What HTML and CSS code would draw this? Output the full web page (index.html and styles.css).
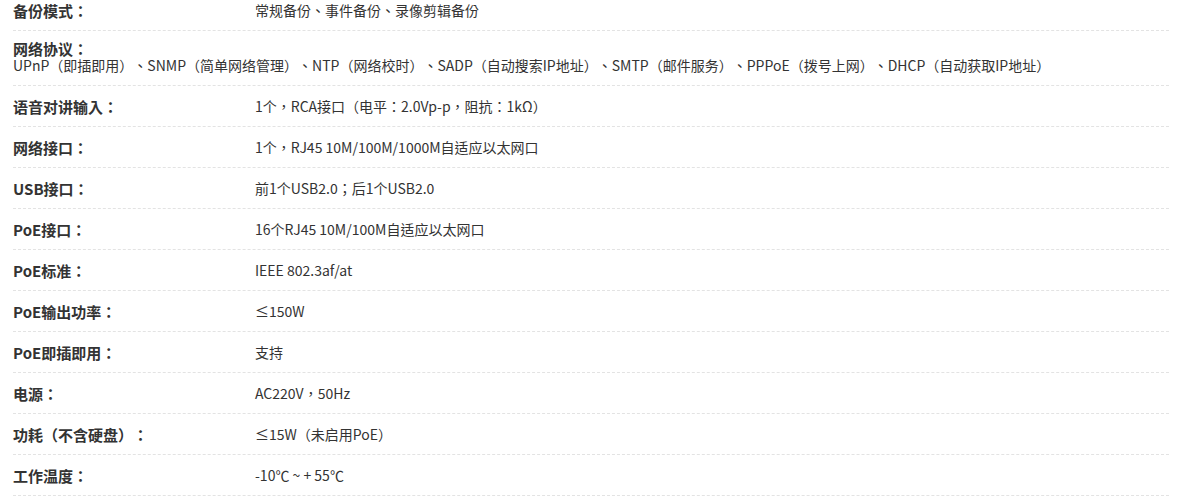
FILE: index.html
```html
<html>
<head>
<meta charset="utf-8">
<title>产品参数</title>
<link rel="stylesheet" href="styles.css">
</head>
<body>
    <div class="spec-list">
        <div class="spec-row">
            <span class="spec-name">备份模式：</span>
            <span class="spec-value">常规备份、事件备份、录像剪辑备份</span>
        </div>
        <div class="spec-row spec-row-wide">
            <div class="spec-name">网络协议：</div>
            <div class="spec-value">UPnP（即插即用）、SNMP（简单网络管理）、NTP（网络校时）、SADP（自动搜索IP地址）、SMTP（邮件服务）、PPPoE（拨号上网）、DHCP（自动获取IP地址）</div>
        </div>
        <div class="spec-row">
            <span class="spec-name">语音对讲输入：</span>
            <span class="spec-value">1个，RCA接口（电平：2.0Vp-p，阻抗：1kΩ）</span>
        </div>
        <div class="spec-row">
            <span class="spec-name">网络接口：</span>
            <span class="spec-value">1个，RJ45 10M/100M/1000M自适应以太网口</span>
        </div>
        <div class="spec-row">
            <span class="spec-name">USB接口：</span>
            <span class="spec-value">前1个USB2.0；后1个USB2.0</span>
        </div>
        <div class="spec-row">
            <span class="spec-name">PoE接口：</span>
            <span class="spec-value">16个RJ45 10M/100M自适应以太网口</span>
        </div>
        <div class="spec-row">
            <span class="spec-name">PoE标准：</span>
            <span class="spec-value">IEEE 802.3af/at</span>
        </div>
        <div class="spec-row">
            <span class="spec-name">PoE输出功率：</span>
            <span class="spec-value">≤150W</span>
        </div>
        <div class="spec-row">
            <span class="spec-name">PoE即插即用：</span>
            <span class="spec-value">支持</span>
        </div>
        <div class="spec-row">
            <span class="spec-name">电源：</span>
            <span class="spec-value">AC220V，50Hz</span>
        </div>
        <div class="spec-row">
            <span class="spec-name">功耗（不含硬盘）：</span>
            <span class="spec-value">≤15W（未启用PoE）</span>
        </div>
        <div class="spec-row">
            <span class="spec-name">工作温度：</span>
            <span class="spec-value">-10℃ ~ + 55℃</span>
        </div>
    </div>
</body>
</html>
```

FILE: styles.css
```css
body{
    margin: 0;
    background: #fff;
    color: #333;
    font-family: "Noto Sans CJK TC", "Noto Sans CJK SC", sans-serif;
    text-spacing-trim: space-all; /* keep full width punctuation */
}
.spec-list{
    margin-top: -10px; /* page is scrolled a little */
    padding: 0 8px 0 13px;
}
.spec-row{
    display: flex;
    align-items: center;
    height: 40px;
    border-bottom: 1px dashed #e3e3e3;
}
.spec-name{
    width: 242px;
    flex-shrink: 0;
    font-size: 15px;
    font-weight: bold;
}
.spec-value{
    font-size: 14px;
}
/* the long value drops under its label */
.spec-row-wide{
    display: block;
    height: auto;
    padding: 10px 0 12px;
}
.spec-row-wide .spec-name{
    line-height: 16px;
}
.spec-row-wide .spec-value{
    line-height: 16px;
    white-space: nowrap;
}
```
